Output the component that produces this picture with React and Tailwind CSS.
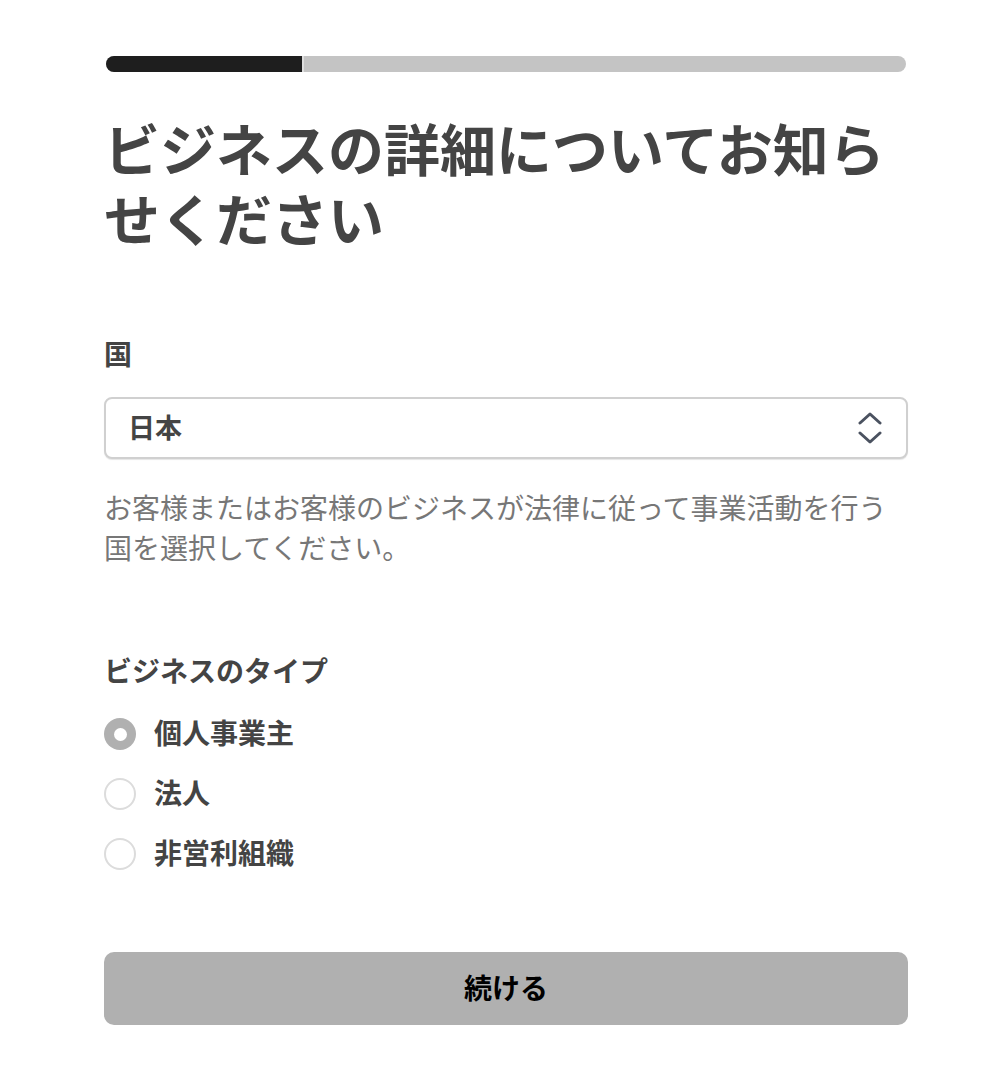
import { useState } from 'react'

const options = ['個人事業主', '法人', '非営利組織']

const App = () => {
  const [type, setType] = useState('個人事業主')

  return (
    <div
      className="min-h-screen bg-white pl-[104px] pt-[56px] pb-[48px] text-[#444]"
      style={{ fontFamily: '"Noto Sans CJK JP", "Noto Sans", sans-serif' }}
    >
      <div className="w-[804px]">
        {/* progress */}
        <div className="mx-[2px] flex h-[16px] overflow-hidden rounded-full bg-[#c4c4c4]">
          <div className="w-[196px] bg-[#1e1e1e]" />
          <div className="w-[2px] bg-[#dedede]" />
        </div>

        <h1 className="mt-[40px] text-[56px] font-bold leading-[70px] text-[#444]">
          ビジネスの詳細についてお知らせください
        </h1>

        {/* country */}
        <div className="mt-[81px]">
          <label className="block text-[28px] font-bold leading-[40px]">国</label>
          <div className="mt-[24px] flex h-[62px] items-center justify-between rounded-[8px] border-2 border-[#d0d0d0] bg-white pl-[22px] pr-[24px] shadow-[0_1px_1px_rgba(0,0,0,0.1)]">
            <span className="pb-[4px] text-[27px] font-bold leading-none">日本</span>
            <svg width="24" height="32" viewBox="0 0 24 32" fill="none" stroke="#4b5260" strokeWidth="3" strokeLinecap="round" strokeLinejoin="round">
              <path d="M2 11 L12 2 L22 11" />
              <path d="M2 21 L12 30 L22 21" />
            </svg>
          </div>
          <p className="mt-[28px] text-[28px] leading-[40px] text-[#777]">
            お客様またはお客様のビジネスが法律に従って事業活動を行う国を選択してください。
          </p>
        </div>

        {/* business type */}
        <div className="mt-[83px]">
          <label className="block text-[28px] font-bold leading-[40px]">ビジネスのタイプ</label>
          <div className="mt-[24px] flex flex-col gap-[20px]">
            {options.map(o => (
              <button
                key={o}
                type="button"
                onClick={() => setType(o)}
                className="flex h-[40px] items-center gap-[18px] text-left"
              >
                {type === o ? (
                  <span className="flex h-[32px] w-[32px] items-center justify-center rounded-full bg-[#b0b0b0]">
                    <span className="h-[13px] w-[13px] rounded-full bg-white" />
                  </span>
                ) : (
                  <span className="h-[32px] w-[32px] rounded-full border-2 border-[#dcdcdc] bg-white" />
                )}
                <span className="pb-[4px] text-[28px] font-bold leading-none text-[#444]">{o}</span>
              </button>
            ))}
          </div>
        </div>

        <button
          type="button"
          className="mt-[78px] h-[73px] w-full rounded-[10px] bg-[#b0b0b0] pb-[4px] text-[28px] font-bold text-black"
        >
          続ける
        </button>
      </div>
    </div>
  )
}

export default App
